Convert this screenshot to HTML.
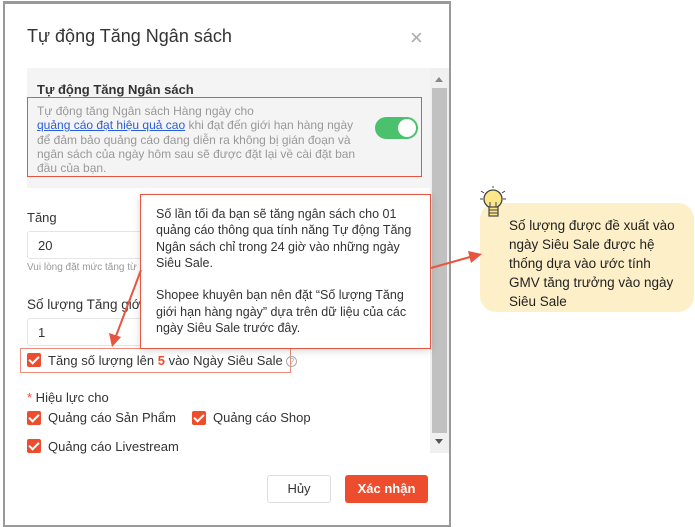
<!DOCTYPE html>
<html><head><meta charset="utf-8"><style>
*{box-sizing:border-box;margin:0;padding:0}
body{width:695px;height:527px;background:#fff;font-family:"Liberation Sans",Arial,sans-serif;position:relative;overflow:hidden}
.a{position:absolute}
.cb{position:absolute;width:14px;height:14px;background:#ee4d2d;border-radius:2px}
.cb:after{content:"";position:absolute;left:4px;top:1px;width:4px;height:8px;border:solid #fff;border-width:0 2px 2px 0;transform:rotate(45deg)}
.t{font-size:13px;color:#333}
</style></head><body>
<div class="a" style="left:3px;top:1px;width:448px;height:526px;border:2px solid #999;border-top-width:3px;background:#fff"></div>
<div class="a" style="left:27px;top:26px;font-size:18px;color:#333">Tự động Tăng Ngân sách</div>
<div class="a" style="left:410px;top:28px;font-size:22px;color:#aaa;line-height:20px">×</div>
<div class="a" style="left:27px;top:68px;width:404px;height:120px;background:#f4f4f4"></div>
<div class="a" style="left:37px;top:82px;font-size:13px;font-weight:bold;color:#333">Tự động Tăng Ngân sách</div>
<div class="a" style="left:27px;top:97px;width:395px;height:80px;border:1px solid #e8553f"></div>
<div class="a" style="left:37px;top:104px;width:340px;font-size:12px;line-height:14.3px;color:#999;white-space:nowrap">Tự động tăng Ngân sách Hàng ngày cho<br><span style="color:#2a5ed8;text-decoration:underline">quảng cáo đạt hiệu quả cao</span> khi đạt đến giới hạn hàng ngày<br>để đảm bảo quảng cáo đang diễn ra không bị gián đoạn và<br>ngân sách của ngày hôm sau sẽ được đặt lại về cài đặt ban<br>đầu của bạn.</div>
<div class="a" style="left:375px;top:117px;width:43px;height:22px;border-radius:11px;background:#4bc16d"><div class="a" style="right:2px;top:2px;width:18px;height:18px;border-radius:50%;background:#fff"></div></div>
<div class="a" style="left:430px;top:68px;width:19px;height:385px;background:#f0f0f0"></div>
<div class="a" style="left:432px;top:88px;width:15px;height:345px;background:#c1c1c1"></div>
<div class="a" style="left:435px;top:77px;border:4px solid transparent;border-bottom:5px solid #888;border-top:0"></div>
<div class="a" style="left:435px;top:439px;border:4px solid transparent;border-top:5px solid #555;border-bottom:0"></div>
<div class="a t" style="left:27px;top:210px">Tăng</div>
<div class="a" style="left:27px;top:231px;width:260px;height:28px;border:1px solid #e5e5e5;border-radius:3px"></div>
<div class="a t" style="left:38px;top:238px">20</div>
<div class="a" style="left:27px;top:262px;font-size:10px;color:#999">Vui lòng đặt mức tăng từ</div>
<div class="a t" style="left:27px;top:297px;font-size:13.5px">Số lượng Tăng giới hạn</div>
<div class="a" style="left:27px;top:318px;width:255px;height:28px;border:1px solid #e5e5e5;border-radius:3px"></div>
<div class="a t" style="left:38px;top:325px">1</div>
<div class="a" style="left:20px;top:348px;width:271px;height:25px;border:1px solid #f08a7a"></div>
<div class="cb" style="left:27px;top:353px"></div>
<div class="a t" style="left:48px;top:353px">Tăng số lượng lên <b style="color:#ee4d2d">5</b> vào Ngày Siêu Sale <span style="display:inline-block;width:11px;height:11px;border:1px solid #aaa;border-radius:50%;font-size:8px;color:#aaa;text-align:center;line-height:9px;vertical-align:1px">?</span></div>
<div class="a t" style="left:27px;top:390px"><span style="color:#ee4d2d">*</span> Hiệu lực cho</div>
<div class="cb" style="left:27px;top:411px"></div>
<div class="a t" style="left:48px;top:410px">Quảng cáo Sản Phẩm</div>
<div class="cb" style="left:192px;top:411px"></div>
<div class="a t" style="left:213px;top:410px">Quảng cáo Shop</div>
<div class="cb" style="left:27px;top:439px"></div>
<div class="a t" style="left:48px;top:439px">Quảng cáo Livestream</div>
<div class="a" style="left:267px;top:475px;width:64px;height:28px;border:1px solid #ddd;border-radius:3px;font-size:13px;color:#333;text-align:center;line-height:26px">Hủy</div>
<div class="a" style="left:345px;top:475px;width:83px;height:28px;background:#ee4d2d;border-radius:3px;font-size:13px;font-weight:bold;color:#fff;text-align:center;line-height:28px">Xác nhận</div>
<div class="a" style="left:140px;top:194px;width:291px;height:155px;background:#fff;border:1px solid #e8553f;box-shadow:0 2px 8px rgba(0,0,0,.15)"></div>
<div class="a" style="left:156px;top:206px;width:265px;font-size:12.5px;line-height:16.3px;color:#333">Số lần tối đa bạn sẽ tăng ngân sách cho 01 quảng cáo thông qua tính năng Tự động Tăng Ngân sách chỉ trong 24 giờ vào những ngày Siêu Sale.<br><br>Shopee khuyên bạn nên đặt “Số lượng Tăng giới hạn hàng ngày” dựa trên dữ liệu của các ngày Siêu Sale trước đây.</div>
<div class="a" style="left:480px;top:203px;width:214px;height:109px;background:#fdefc7;border-radius:16px"></div>
<div class="a" style="left:509px;top:216px;width:180px;font-size:13.5px;line-height:19px;color:#222;white-space:nowrap">Số lượng được đề xuất vào<br>ngày Siêu Sale được hệ<br>thống dựa vào ước tính<br>GMV tăng trưởng vào ngày<br>Siêu Sale</div>
<svg class="a" style="left:0;top:0" width="695" height="527">
<line x1="141" y1="270" x2="116" y2="336" stroke="#e8553f" stroke-width="2"/>
<polygon points="112,347 109,333 121,337" fill="#e8553f"/>
<line x1="431" y1="268" x2="470" y2="257" stroke="#e8553f" stroke-width="2"/>
<polygon points="482,254 468,251 471,263" fill="#e8553f"/>
<g transform="translate(479,186)">
<circle cx="14" cy="13" r="9" fill="#fde58a" stroke="#444" stroke-width="1.3"/>
<rect x="10" y="21" width="9" height="9" fill="#fde58a" stroke="#444" stroke-width="1.2"/>
<path d="M11,16 v5 M17,16 v5 M10,24 h9 M10,27 h9" stroke="#444" stroke-width="1"/>
<path d="M2,5 l3,2 M1,13 h3 M26,5 l-3,2 M27,13 h-3 M14,0 v2" stroke="#444" stroke-width="1"/>
</g>
</svg>
</body></html>
